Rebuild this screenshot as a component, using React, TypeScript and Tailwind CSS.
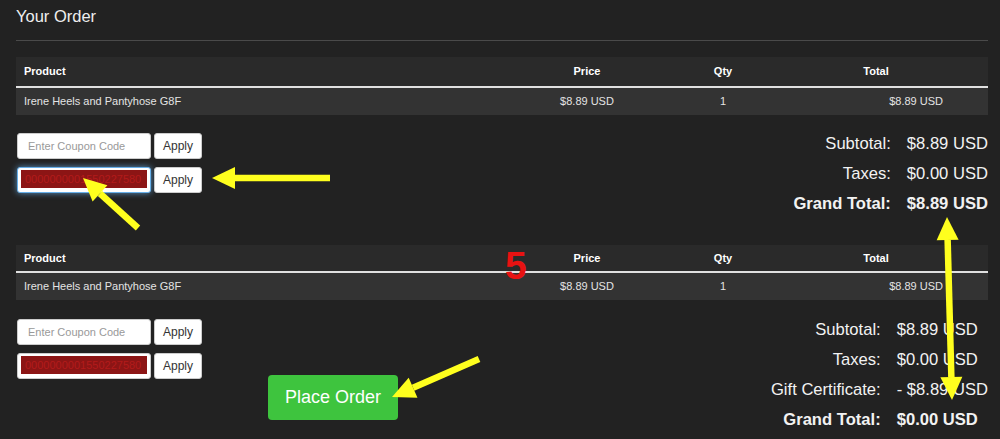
const YELLOW = "#ffff1e";

type Pt = [number, number];

// head polygon pointing at `tip`, coming from `from`
const head = (from: Pt, tip: Pt, len: number, wid: number) => {
  const dx = tip[0] - from[0];
  const dy = tip[1] - from[1];
  const d = Math.hypot(dx, dy);
  const ux = dx / d;
  const uy = dy / d;
  const bx = tip[0] - ux * len;
  const by = tip[1] - uy * len;
  const px = -uy * (wid / 2);
  const py = ux * (wid / 2);
  return {
    base: [bx, by] as Pt,
    points: `${tip[0]},${tip[1]} ${bx + px},${by + py} ${bx - px},${by - py}`,
  };
};

const Arrow = ({ from, to, both = false }: { from: Pt; to: Pt; both?: boolean }) => {
  const h1 = head(from, to, 23, 22);
  const h2 = both ? head(to, from, 23, 22) : null;
  const start = h2 ? h2.base : from;
  return (
    <g fill={YELLOW}>
      <line
        x1={start[0]}
        y1={start[1]}
        x2={h1.base[0]}
        y2={h1.base[1]}
        stroke={YELLOW}
        strokeWidth={6.5}
      />
      <polygon points={h1.points} />
      {h2 && <polygon points={h2.points} />}
    </g>
  );
};

const OrderTable = ({ headH }: { headH: string }) => (
  <div className="text-[11px]">
    <div
      className={`grid grid-cols-[486px_170px_102px_1fr] ${headH} items-center bg-[#2a2a2a] border-b-2 border-[#e0e0e0] font-bold text-white`}
    >
      <div className="pl-2">Product</div>
      <div className="text-center">Price</div>
      <div className="text-center">Qty</div>
      <div className="text-center pr-[10px]">Total</div>
    </div>
    <div className="grid grid-cols-[486px_170px_102px_1fr] h-[27px] items-center bg-[#333333] text-[#e4e4e4]">
      <div className="pl-2">Irene Heels and Pantyhose G8F</div>
      <div className="text-center">$8.89 USD</div>
      <div className="text-center">1</div>
      <div className="text-right pr-[45px]">$8.89 USD</div>
    </div>
  </div>
);

const ApplyButton = () => (
  <button className="h-[26px] w-[48px] rounded-[3px] border border-[#cccccc] bg-white text-[12px] text-[#333]">
    Apply
  </button>
);

const Coupons = ({ focused }: { focused: boolean }) => (
  <div className="ml-px flex flex-col gap-2 pt-1">
    <div className="flex gap-[3px]">
      <div className="flex h-[26px] w-[134px] items-center rounded-[3px] border border-[#cccccc] bg-white pl-[10px] text-[11px] text-[#999]">
        Enter Coupon Code
      </div>
      <ApplyButton />
    </div>
    <div className="flex gap-[3px]">
      <div
        className={`h-[26px] w-[134px] rounded-[3px] bg-white px-[3px] pt-[2px] pb-[4px] ${
          focused
            ? "border border-[#66afe9] shadow-[0_0_6px_rgba(102,175,233,0.8)]"
            : "border border-[#cccccc]"
        }`}
      >
        <div className="h-full overflow-hidden whitespace-nowrap bg-[#8c1515] pl-[4px] text-[11px] leading-[18px] text-[#b31b1b]">
          0000000001550227580
        </div>
      </div>
      <ApplyButton />
    </div>
  </div>
);

const Totals = ({ rows }: { rows: { label: string; value: string; bold?: boolean }[] }) => (
  <div className="ml-auto grid grid-cols-[auto_auto] gap-x-4 text-[16.6px] leading-[30px] text-[#f2f2f2]">
    {rows.map((r) => [
      <div key={r.label + "l"} className={`text-right ${r.bold ? "font-bold" : ""}`}>
        {r.label}
      </div>,
      <div key={r.label + "v"} className={r.bold ? "font-bold" : ""}>
        {r.value}
      </div>,
    ])}
  </div>
);

export default function App() {
  return (
    <div className="relative h-[439px] w-[1000px] overflow-hidden bg-[#222222] pl-4 pr-3 font-['Liberation_Sans',Arial,sans-serif]">
      <h1 className="h-[32px] text-[16.5px] leading-[32px] text-[#eeeeee]">Your Order</h1>
      <div className="mt-2 h-px bg-[#4a4a4a]" />

      <div className="mt-4">
        <OrderTable headH="h-[31px]" />
      </div>

      <div className="mt-[14px] flex items-start">
        <Coupons focused />
        <Totals
          rows={[
            { label: "Subtotal:", value: "$8.89 USD" },
            { label: "Taxes:", value: "$0.00 USD" },
            { label: "Grand Total:", value: "$8.89 USD", bold: true },
          ]}
        />
      </div>

      <div className="mt-[26px]">
        <OrderTable headH="h-[28px]" />
      </div>

      <div className="mt-[15px] flex items-start">
        <Coupons focused={false} />
        <button className="ml-[66px] mt-[60px] h-[45px] w-[130px] rounded-[4px] bg-[#3ec43e] text-[18px] text-white">
          Place Order
        </button>
        <Totals
          rows={[
            { label: "Subtotal:", value: "$8.89 USD" },
            { label: "Taxes:", value: "$0.00 USD" },
            { label: "Gift Certificate:", value: "- $8.89 USD" },
            { label: "Grand Total:", value: "$0.00 USD", bold: true },
          ]}
        />
      </div>

      {/* annotation overlay */}
      <div className="pointer-events-none absolute left-[505px] top-[246px] text-[39px] font-bold leading-none text-[#e81212]">
        5
      </div>
      <svg className="pointer-events-none absolute left-0 top-0" width={1000} height={439}>
        <Arrow from={[330, 178]} to={[212, 178]} />
        <Arrow from={[138, 228]} to={[83, 178]} />
        <Arrow from={[952, 400]} to={[947, 217]} both />
        <Arrow from={[479, 359]} to={[392, 397]} />
      </svg>
    </div>
  );
}
